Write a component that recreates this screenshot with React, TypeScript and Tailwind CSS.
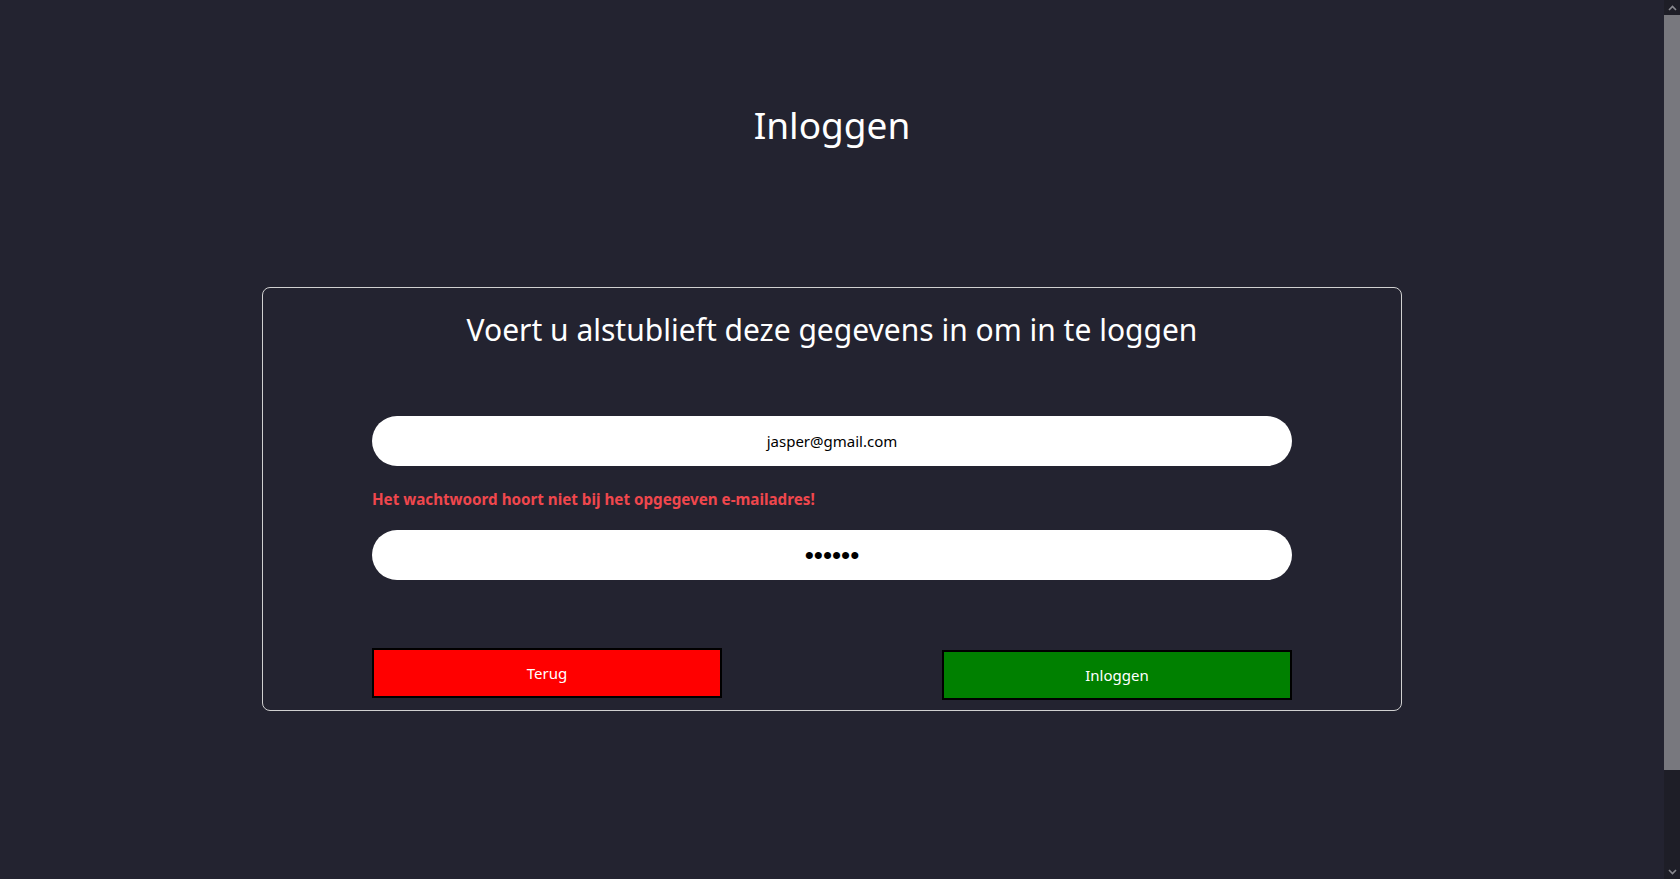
function Chevron({ up }: { up?: boolean }) {
  return (
    <svg width="9" height="6" viewBox="0 0 9 6" className="mx-auto">
      <path
        d={up ? "M1 5 L4.5 1.5 L8 5" : "M1 1 L4.5 4.5 L8 1"}
        fill="none"
        stroke="#8a8a90"
        strokeWidth="1.6"
      />
    </svg>
  );
}

export default function App() {
  return (
    <div className="flex h-screen overflow-hidden bg-[#232330] text-white" style={{ fontFamily: '"Noto Sans", "Open Sans", sans-serif' }}>
      <main className="flex-1">
        <div className="pt-[103px]">
          <h1 className="text-center text-[37px] leading-[1.2] font-normal">Inloggen</h1>
        </div>

        <div className="mx-auto mt-[140px] w-[1140px] rounded-lg border border-[#d0d0d0] px-[109px] pt-[24px] pb-[10px]">
          <h2 className="text-center text-[30px] leading-[1.2] font-normal">
            Voert u alstublieft deze gegevens in om in te loggen
          </h2>

          <input
            type="email"
            defaultValue="jasper@gmail.com"
            className="mt-[68px] block h-[50px] w-full rounded-full bg-white text-center text-[15px] text-black outline-none"
          />

          <p className="mt-[21px] text-[15.2px] leading-6 font-bold text-[#f0474d]">
            Het wachtwoord hoort niet bij het opgegeven e-mailadres!
          </p>

          <input
            type="password"
            defaultValue="123456"
            className="mt-[19px] block h-[50px] w-full rounded-full bg-white text-center text-[26px] text-black outline-none"
            style={{ fontFamily: '"Liberation Sans", Arial, sans-serif' }}
          />

          <div className="mt-[68px] flex items-start justify-between">
            <button className="h-[50px] w-[350px] border-2 border-black bg-[#ff0000] text-[15px] text-white">
              Terug
            </button>
            <button className="mt-[2px] h-[50px] w-[350px] border-2 border-black bg-[#008000] text-[15px] text-white">
              Inloggen
            </button>
          </div>
        </div>
      </main>

      {/* scrollbar */}
      <aside className="flex w-[16px] flex-col bg-[#1e1e27]">
        <div className="flex h-[15px] items-center">
          <Chevron up />
        </div>
        <div className="h-[755px] bg-[#78787e]" />
        <div className="flex-1" />
        <div className="flex h-[15px] items-center">
          <Chevron />
        </div>
      </aside>
    </div>
  );
}
